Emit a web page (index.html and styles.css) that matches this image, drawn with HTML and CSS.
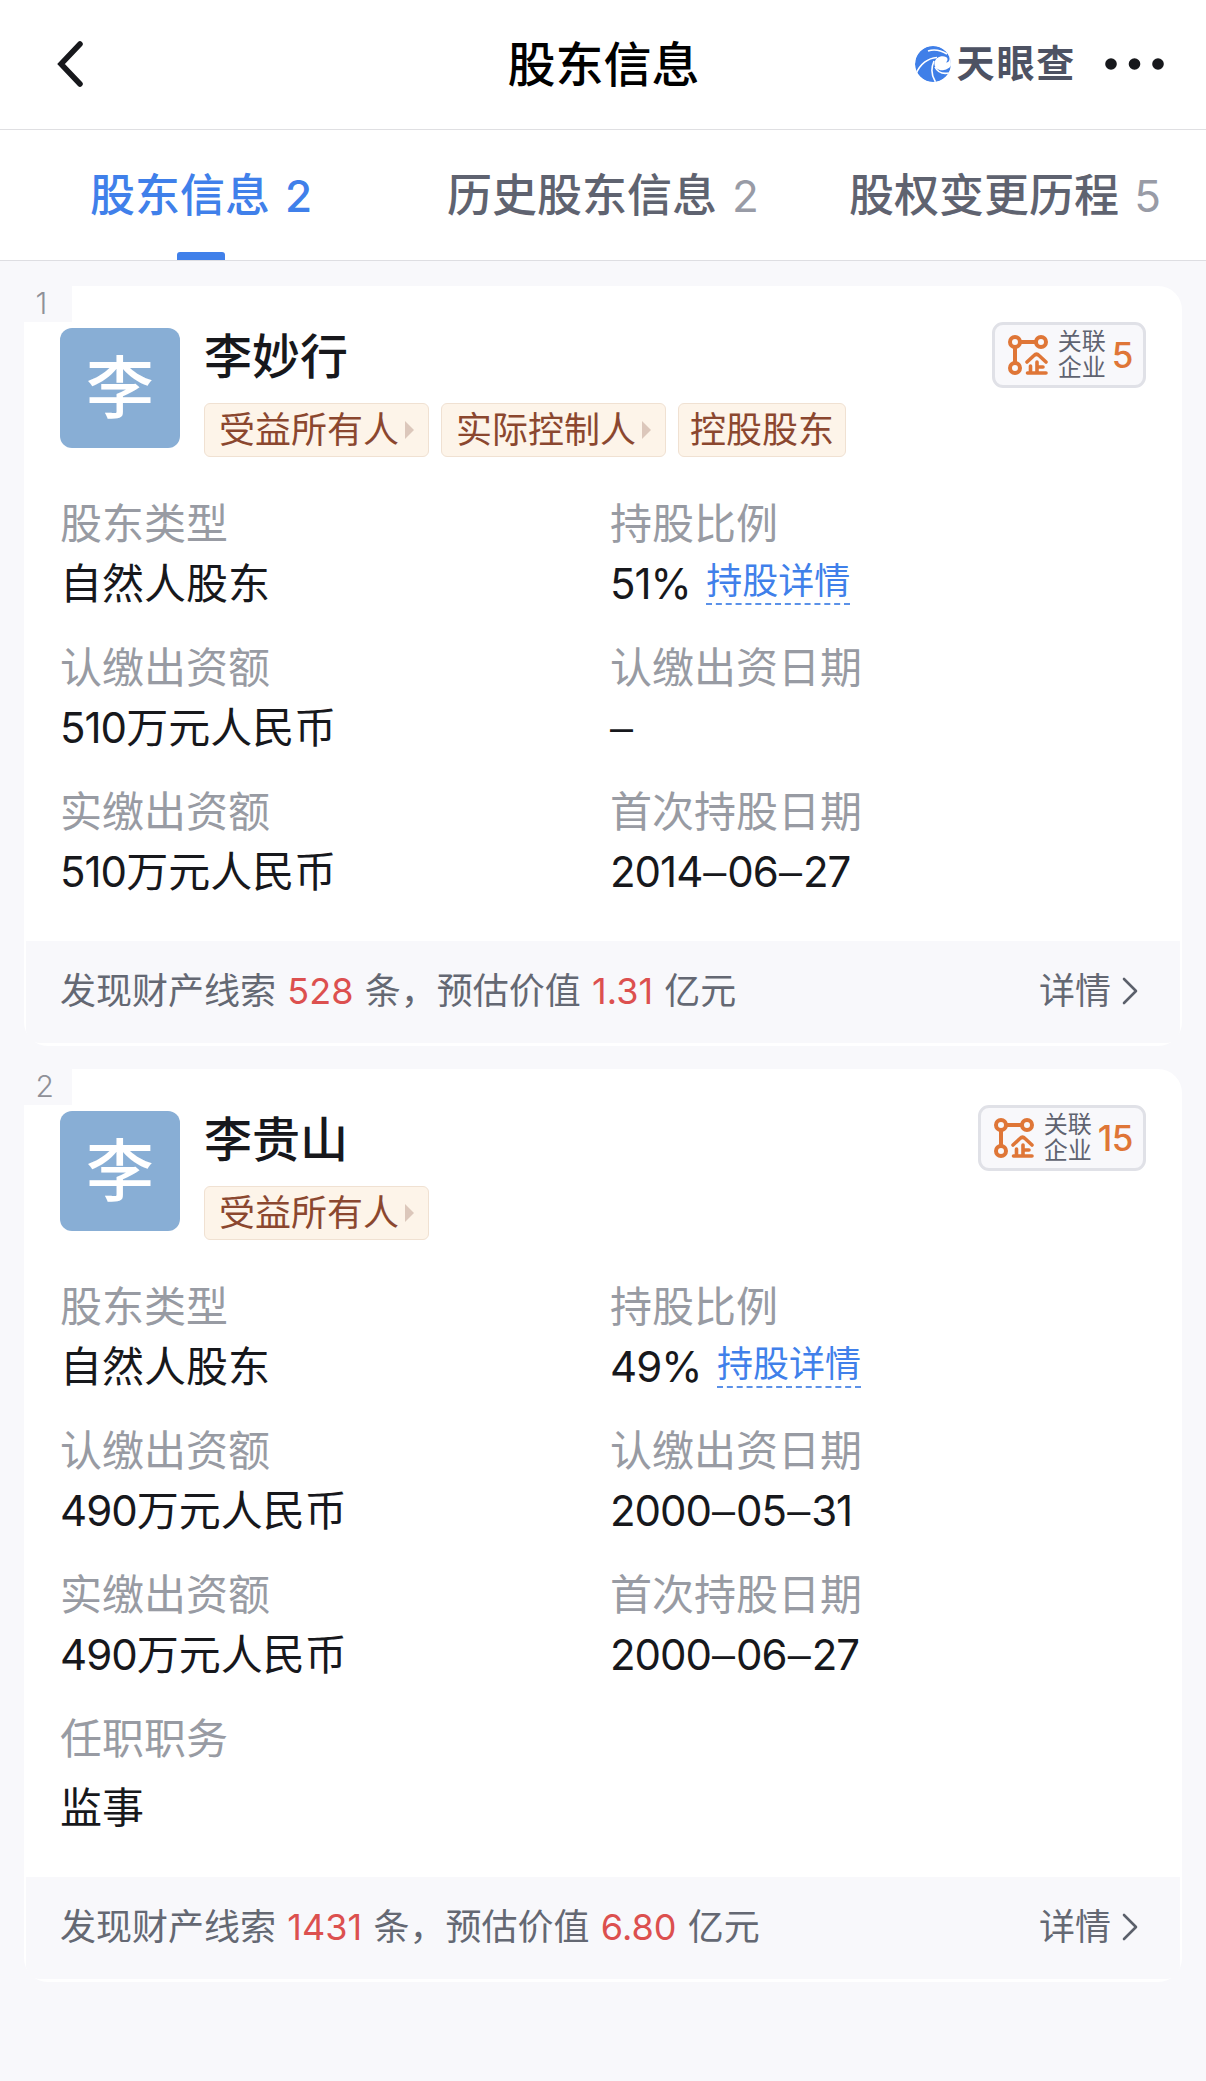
FILE: index.html
```html
<!DOCTYPE html>
<html lang="zh-CN">
<head>
<meta charset="utf-8">
<title>股东信息</title>
<link rel="stylesheet" href="styles.css">
</head>
<body>
<svg width="0" height="0" class="defs">
  <symbol id="relation" viewBox="0 0 40 40">
    <g fill="none" stroke="#df7637" stroke-width="4" stroke-linecap="round" stroke-linejoin="round">
      <circle cx="7" cy="7" r="5"/><circle cx="33" cy="7" r="5"/><circle cx="7" cy="33" r="5"/>
      <path d="M12 7H28M7 12V28" stroke-linecap="butt"/>
      <path d="M19 27L26 20.500Q28.500 18 31 20.500L38 27" stroke-width="3.600"/>
      <path d="M29 27V37M29 32H35M22.500 31V37M19.500 38H38" stroke-width="3.600"/>
    </g>
  </symbol>
  <symbol id="chevron" viewBox="0 0 16 28">
    <path d="M2 2L14 14L2 26" fill="none" stroke="#5b606b" stroke-width="2.600" stroke-linecap="round" stroke-linejoin="round"/>
  </symbol>
</svg>

<header class="header">
  <svg class="back" viewBox="0 0 28 48"><path d="M24 4L5 24L24 44" fill="none" stroke="#17181c" stroke-width="5.500" stroke-linecap="round" stroke-linejoin="miter"/></svg>
  <h1 class="title">股东信息</h1>
  <div class="actions">
    <svg class="logo" viewBox="0 0 36 36">
      <circle cx="18" cy="18" r="18" fill="#3f7fe8"/>
      <path d="M38 5L33 8C35.500 12 35 16.500 31 16.500C33 14.500 33 12 31 11C26 9 20 12 19.500 17C19 22 24 25 29 24C32 23.500 34 22 36 20L40 17Z" fill="#fff"/>
      <path d="M13 5Q22 2 32 8M1 28C5 18 13 12 22 11.500M20.500 36C16 29 16 22 19 15M20 21C23 27 29 28 34 27" fill="none" stroke="#fff" stroke-width="1.600"/>
    </svg>
    <span class="brand">天眼查</span>
    <svg class="more" viewBox="0 0 60 12"><circle cx="6" cy="6" r="5.800"/><circle cx="29.500" cy="6" r="5.800"/><circle cx="53" cy="6" r="5.800"/></svg>
  </div>
</header>

<nav class="tabs">
  <a class="tab active">股东信息<span class="count">2</span></a>
  <a class="tab">历史股东信息<span class="count">2</span></a>
  <a class="tab">股权变更历程<span class="count">5</span></a>
</nav>

<main class="list">
  <section class="card">
    <span class="index">1</span>
    <div class="person">
      <div class="avatar">李</div>
      <div class="who">
        <h2 class="name">李妙行</h2>
        <div class="tags"><span class="tag arrow">受益所有人</span><span class="tag arrow">实际控制人</span><span class="tag">控股股东</span></div>
      </div>
      <div class="related"><svg class="rel-icon"><use href="#relation"/></svg><span class="rel-text">关联<br>企业</span><span class="rel-num">5</span></div>
    </div>
    <div class="fields">
      <div class="field"><div class="label">股东类型</div><div class="value">自然人股东</div></div>
      <div class="field"><div class="label">持股比例</div><div class="value"><span class="num">51%</span><a class="link">持股详情</a></div></div>
      <div class="field"><div class="label">认缴出资额</div><div class="value"><span class="num">510</span>万元人民币</div></div>
      <div class="field"><div class="label">认缴出资日期</div><div class="value"><i>–</i></div></div>
      <div class="field"><div class="label">实缴出资额</div><div class="value"><span class="num">510</span>万元人民币</div></div>
      <div class="field"><div class="label">首次持股日期</div><div class="value num">2014<i>–</i>06<i>–</i>27</div></div>
    </div>
    <div class="clue"><span>发现财产线索 <b>528</b> 条，预估价值 <b>1.31</b> 亿元</span><span class="detail">详情<svg class="chev"><use href="#chevron"/></svg></span></div>
  </section>

  <section class="card">
    <span class="index">2</span>
    <div class="person">
      <div class="avatar">李</div>
      <div class="who">
        <h2 class="name">李贵山</h2>
        <div class="tags"><span class="tag arrow">受益所有人</span></div>
      </div>
      <div class="related"><svg class="rel-icon"><use href="#relation"/></svg><span class="rel-text">关联<br>企业</span><span class="rel-num">15</span></div>
    </div>
    <div class="fields">
      <div class="field"><div class="label">股东类型</div><div class="value">自然人股东</div></div>
      <div class="field"><div class="label">持股比例</div><div class="value"><span class="num">49%</span><a class="link">持股详情</a></div></div>
      <div class="field"><div class="label">认缴出资额</div><div class="value"><span class="num">490</span>万元人民币</div></div>
      <div class="field"><div class="label">认缴出资日期</div><div class="value num">2000<i>–</i>05<i>–</i>31</div></div>
      <div class="field"><div class="label">实缴出资额</div><div class="value"><span class="num">490</span>万元人民币</div></div>
      <div class="field"><div class="label">首次持股日期</div><div class="value num">2000<i>–</i>06<i>–</i>27</div></div>
      <div class="field post"><div class="label">任职职务</div><div class="value">监事</div></div>
    </div>
    <div class="clue"><span>发现财产线索 <b>1431</b> 条，预估价值 <b>6.80</b> 亿元</span><span class="detail">详情<svg class="chev"><use href="#chevron"/></svg></span></div>
  </section>
</main>
</body>
</html>
```
FILE: styles.css
```css
* { box-sizing: border-box; }
body {
  margin: 0;
  min-height: 2081px;
  background: #f8f8fb;
  color: #17181c;
  font-family: Inter, "Noto Sans CJK SC", sans-serif;
}
h1, h2 { margin: 0; font-weight: 500; }
svg { display: block; flex: none; }
.defs { position: absolute; }

.header {
  display: grid;
  grid-template-columns: 1fr auto 1fr;
  align-items: center;
  height: 130px;
  padding: 0 41px 2px 56px;
  background: #fff;
  border-bottom: 1px solid #dfdfe2;
}
.back { width: 28px; height: 48px; }
.title { height: 60px; font-size: 48px; line-height: 62px; color: #000; margin: 0 7px 0 -7px; }
.actions { display: flex; align-items: center; justify-content: flex-end; }
.logo { width: 36px; height: 36px; border-radius: 50%; }
.brand { margin: 0 29px 0 6px; height: 48px; line-height: 47px; font-size: 38px; font-weight: 700; letter-spacing: 1.8px; color: #4d5263; }
.more { width: 60px; height: 12px; fill: #17181c; }

.tabs {
  display: grid;
  grid-template-columns: repeat(3, 402px);
  height: 131px;
  background: #fff;
  border-bottom: 1px solid #dedee2;
}
.tab {
  position: relative;
  height: 130px;
  line-height: 132px;
  text-align: center;
  font-size: 45px;
  font-weight: 500;
  color: #5f6370;
  white-space: nowrap;
}
.count { margin-left: 15px; font-size: 44px; font-weight: 400; color: #989ba6; }
.active, .active .count { color: #4080ea; font-weight: 500; }
.active::after {
  content: "";
  position: absolute;
  left: 177px;
  bottom: 0;
  width: 48px;
  height: 8px;
  border-radius: 3px 3px 0 0;
  background: #4080ea;
}

.list { display: flex; flex-direction: column; gap: 23px; padding: 25px 24px 0; }
.card {
  position: relative;
  padding: 42px 2px 3px;
  background: #fff;
  border-radius: 24px;
  border-top-left-radius: 0;
}
.index {
  position: absolute;
  left: 0;
  top: 0;
  width: 48px;
  height: 36px;
  padding-left: 11.5px;
  background: #f8f8fb;
  color: #8f9098;
  font-size: 30px;
  font-weight: 300;
  line-height: 34px;
}
.person { display: flex; height: 150px; padding: 0 34px; }
.avatar {
  width: 120px;
  height: 120px;
  border-radius: 12px;
  background: #88aed5;
  color: #fff;
  font-size: 68px;
  font-weight: 500;
  line-height: 121px;
  text-align: center;
}
.who { flex: 1; margin-left: 24px; }
.name { height: 60px; line-height: 58px; font-size: 48px; }
.tags { display: flex; gap: 12px; margin-top: 15px; }
.tag {
  display: flex;
  align-items: center;
  height: 54px;
  padding: 0 11px;
  border: 1px solid #f0e1d2;
  border-radius: 6px;
  background: #fdf4e9;
  color: #8b472f;
  font-size: 36px;
  line-height: 53px;
  white-space: nowrap;
}
.arrow { width: 225px; padding: 0 0 0 14px; }
.arrow::after {
  content: "";
  margin-left: 6px;
  border-left: 9px solid #dcc7bb;
  border-top: 9px solid transparent;
  border-bottom: 9px solid transparent;
}
.related {
  display: flex;
  align-items: center;
  height: 66px;
  margin-top: -6px;
  padding: 0 10px 0 13px;
  border: 3px solid #e0e1e7;
  border-radius: 11px;
  background: #f8f8fb;
}
.rel-icon { width: 40px; height: 40px; }
.rel-text { margin-left: 10px; font-size: 24px; line-height: 26px; color: #5f6370; }
.rel-num { margin-left: 6px; font-size: 35px; font-weight: 500; line-height: 60px; letter-spacing: -.5px; color: #df7637; }

.fields {
  display: grid;
  grid-template-columns: 550px 1fr;
  padding: 16px 34px 15px;
}
.field { height: 144px; white-space: nowrap; }
.label, .value { height: 60px; font-size: 42px; line-height: 60px; }
.label { color: #989ba3; }
.num { letter-spacing: -1px; }
.value i { font-style: normal; font-size: 46px; font-weight: 300; line-height: 40px; margin: 0 2px 0 1px; position: relative; top: 2px; }
.value > i:only-child:first-child { margin-left: 0; }
.post { height: 153px; }
.post .value { margin-top: 9px; }
.link {
  display: inline-block;
  height: 48px;
  margin-left: 15.5px;
  font-size: 36px;
  line-height: 48px;
  color: #4080ea;
  border-bottom: 2px dashed #5b91e8;
  transform: translateY(-5px);
}

.clue {
  display: flex;
  justify-content: space-between;
  align-items: center;
  height: 102px;
  padding: 0 42px 2px 34px;
  border-radius: 0 0 14px 14px;
  background: #f8f8fb;
  color: #646873;
  font-size: 36px;
  line-height: 48px;
  word-spacing: 1.2px;
  white-space: nowrap;
}
.clue b { font-weight: 400; color: #dc504f; }
.detail { display: flex; align-items: center; }
.chev { width: 16px; height: 28px; margin-left: 11px; }
```
